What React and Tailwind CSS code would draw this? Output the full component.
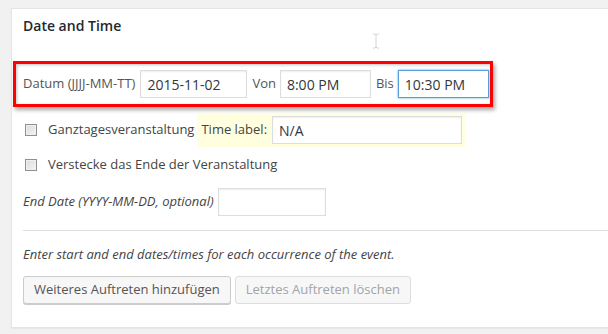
import React from 'react';

const Field = ({ value, width, focus }) => (
  <input
    readOnly
    value={value}
    className={`h-[28px] ${width} px-[6px] bg-white text-[14px] text-[#32373c] outline-none border ${
      focus
        ? 'border-[#5b9dd9] shadow-[0_0_2px_rgba(30,140,190,0.8)]'
        : 'border-[#ddd] shadow-[inset_0_1px_2px_rgba(0,0,0,0.07)]'
    }`}
  />
);

const Check = () => (
  <span className="block w-[12px] h-[12px] border border-[#8e8f8f] bg-gradient-to-br from-[#dcdcdc] to-[#f4f4f4] shadow-[inset_0_0_0_1px_#f0f0f0]" />
);

export default function App() {
  return (
    <div className="w-[608px] h-[334px] overflow-hidden bg-[#f1f1f1] pt-[8px] pl-[11px] font-['Open_Sans',sans-serif] text-[13px] text-[#444]">
      <div className="relative w-[620px] bg-white border border-[#e5e5e5] shadow-[0_1px_1px_rgba(0,0,0,0.04)] px-[11px] pt-[7px] pb-[23px]">
        {/* text cursor in the shot */}
        <svg className="absolute left-[360px] top-[24px]" width="8" height="16" viewBox="0 0 8 16">
          <path d="M1 1h2l1 1 1-1h2M4 2v12M1 15h2l1-1 1 1h2" fill="none" stroke="#d4d4d4" strokeWidth="1" />
        </svg>

        <h2 className="text-[14px] leading-[20px] font-semibold text-[#23282d]">Date and Time</h2>

        <div className="mt-[25px] -ml-[10px] w-[480px] border-[3px] border-[#f00] shadow-[2px_3px_4px_rgba(0,0,0,0.35)]">
          <div className="h-[40px] flex items-center pl-[7px] bg-white shadow-[inset_1px_1px_3px_rgba(0,0,0,0.25)]">
            <span className="text-[#555]">Datum (JJJJ-MM-TT)</span>
            <span className="ml-[5px]"><Field value="2015-11-02" width="w-[107px]" /></span>
            <span className="ml-[5px] text-[#555]">Von</span>
            <span className="ml-[4px]"><Field value="8:00 PM" width="w-[91px]" /></span>
            <span className="ml-[5px] text-[#555]">Bis</span>
            <span className="ml-[4px]"><Field value="10:30 PM" width="w-[91px]" focus /></span>
          </div>
        </div>

        <div className="mt-[6px] flex items-center h-[34px]">
          <span className="ml-[2px]"><Check /></span>
          <span className="ml-[11px]">Ganztagesveranstaltung</span>
          <span className="ml-[3px] h-[34px] w-[268px] bg-[#ffffe0] flex items-center pl-[4px]">
            <span>Time label:</span>
            <span className="ml-[5px]"><Field value="N/A" width="w-[190px]" /></span>
          </span>
        </div>

        <div className="mt-[6px] flex items-center h-[24px]">
          <span className="ml-[2px]"><Check /></span>
          <span className="ml-[11px]">Verstecke das Ende der Veranstaltung</span>
        </div>

        <div className="mt-[11px] flex items-center h-[28px]">
          <span className="italic">End Date (YYYY-MM-DD, optional)</span>
          <span className="ml-[4px]"><Field value="" width="w-[108px]" /></span>
        </div>

        <div className="mt-[14px] border-t border-[#ddd]" />

        <p className="mt-[13px] italic leading-[20px]">
          Enter start and end dates/times for each occurrence of the event.
        </p>

        <div className="mt-[12px] flex gap-[4px]">
          <button className="h-[28px] px-[10px] border border-[#ccc] rounded-[3px] bg-[#f7f7f7] text-[#555] text-[13px] shadow-[0_1px_0_#ccc]">
            Weiteres Auftreten hinzufügen
          </button>
          <button className="h-[28px] px-[10px] border border-[#ddd] rounded-[3px] bg-[#f7f7f7] text-[#a0a5aa] text-[13px]">
            Letztes Auftreten löschen
          </button>
        </div>
      </div>
    </div>
  );
}
